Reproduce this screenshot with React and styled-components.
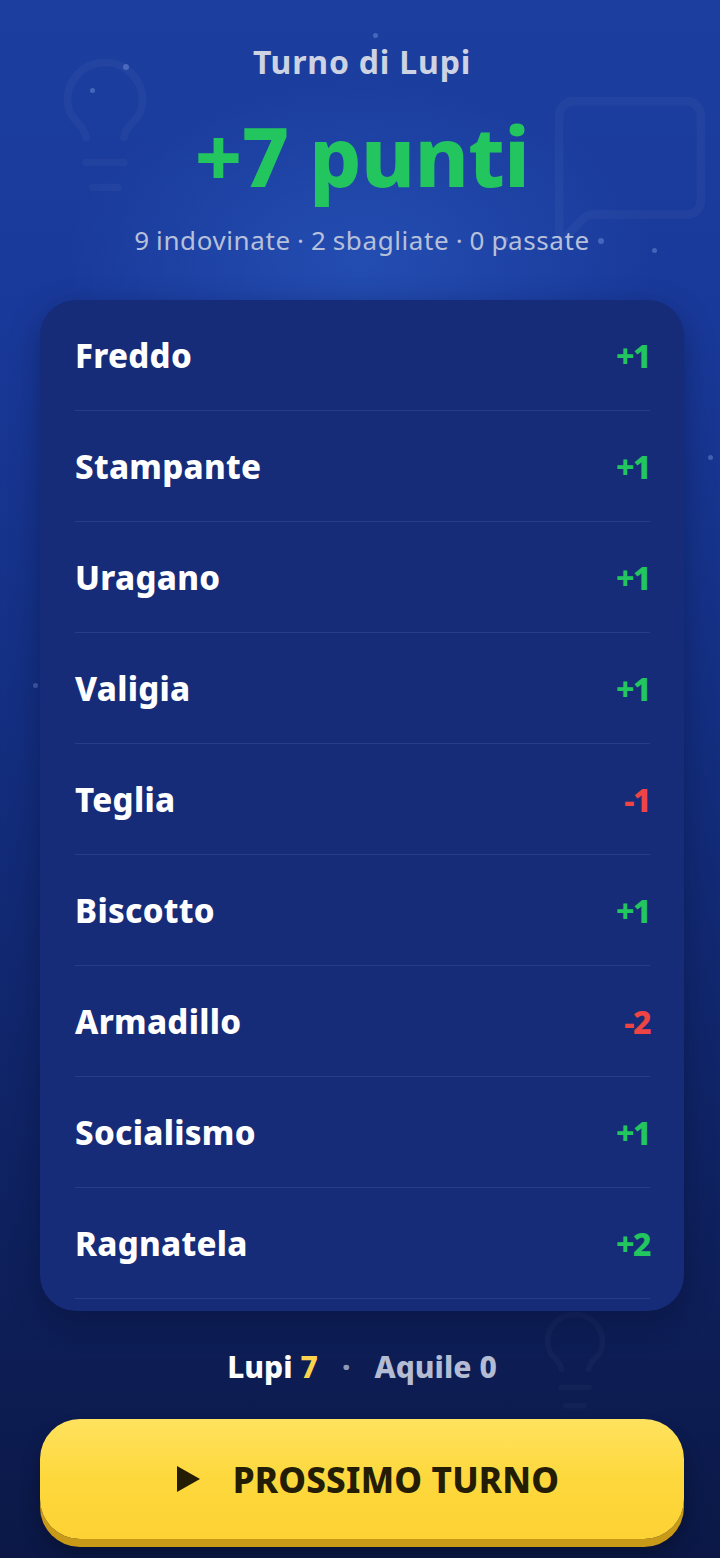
import React from "react"
import styled, { createGlobalStyle } from 'styled-components';
import { Lightbulb, MessageSquare } from "lucide-react";

const GlobalStyle = createGlobalStyle`
  html, body {
    margin: 0;
    padding: 0;
    background: #0c1a4e;
  }
  * { box-sizing: border-box; }
`;

const font = `"Noto Sans", "Open Sans", Lato, sans-serif`;

const Screen = styled.main`
  position: relative;
  width: 720px;
  min-height: 1558px;
  overflow: hidden;
  font-family: ${font};
  background:
    radial-gradient(ellipse 420px 260px at 360px 260px, rgba(46, 96, 200, 0.5), rgba(46, 96, 200, 0) 70%),
    linear-gradient(180deg, #1c3f9f 0%, #19399a 20%, #142f82 45%, #0f2262 75%, #0b1846 100%);
  display: flex;
  flex-direction: column;
  align-items: center;
  padding: 42px 36px 0 40px;
`;

const Deco = styled.div`
  position: absolute;
  left: ${p => p.x}px;
  top: ${p => p.y}px;
  color: #ffffff;
  opacity: ${p => p.o || 0.03};
  pointer-events: none;
`;

const Dot = styled.span`
  position: absolute;
  left: ${p => p.x}px;
  top: ${p => p.y}px;
  width: ${p => p.s || 6}px;
  height: ${p => p.s || 6}px;
  border-radius: 50%;
  background: rgba(170, 195, 255, 0.3);
`;

const TurnLabel = styled.h2`
  margin: 0;
  font-size: 32px;
  font-weight: 700;
  color: #cdd3e2;
  line-height: 40px;
  letter-spacing: 0.8px;
  position: relative;
`;

const Points = styled.h1`
  margin: 23px 0 0;
  font-size: 82px;
  font-weight: 800;
  color: #22c55e;
  line-height: 100px;
  letter-spacing: -0.5px;
  position: relative;
`;

const Summary = styled.p`
  margin: 19px 0 0;
  font-size: 26px;
  color: #b7c0da;
  line-height: 32px;
  letter-spacing: 0.6px;
  word-spacing: -1px;
  position: relative;
`;

const Card = styled.section`
  position: relative;
  margin-top: 44px;
  width: 644px;
  align-self: flex-start;
  background: #172c79;
  border-radius: 36px;
  padding: 0 34px 12px 35px;
  box-shadow: 0 10px 30px rgba(5, 12, 40, 0.35);
`;

const Row = styled.div`
  height: 111px;
  display: flex;
  align-items: center;
  justify-content: space-between;
  border-bottom: 1.5px solid rgba(70, 95, 170, 0.35);
`;

const Word = styled.span`
  font-size: 33px;
  font-weight: 800;
  color: #ffffff;
  letter-spacing: 0.3px;
`;

const Score = styled.span`
  font-size: 32px;
  font-weight: 800;
  color: ${p => (p.neg ? '#ef4444' : '#22c55e')};
  letter-spacing: -1.5px;
`;

const Totals = styled.div`
  position: relative;
  margin-top: 38px;
  font-size: 30px;
  font-weight: 800;
  line-height: 36px;
  display: flex;
  gap: 8px;
  align-items: baseline;
`;

const Team = styled.span`
  color: ${p => (p.active ? '#ffffff' : '#b4bcd3')};
`;

const Num = styled.span`
  color: ${p => (p.active ? '#fcd34d' : '#b4bcd3')};
`;

const Sep = styled.span`
  color: #8e98b8;
  margin: 0 16px;
`;

const NextButton = styled.button`
  position: relative;
  margin-top: 34px;
  align-self: flex-start;
  width: 644px;
  height: 120px;
  border: none;
  border-radius: 40px;
  background: linear-gradient(180deg, #ffe25e 0%, #fdd83c 50%, #fdd235 100%);
  box-shadow: 0 8px 0 #c99a18, 0 14px 20px rgba(0, 0, 0, 0.3);
  display: flex;
  align-items: center;
  justify-content: center;
  gap: 32px;
  font-family: ${font};
  font-size: 35px;
  font-weight: 800;
  color: #241d06;
  letter-spacing: 0.2px;
  padding: 0 0 0 10px;
`;

const words = [
  ['Freddo', '+1'],
  ['Stampante', '+1'],
  ['Uragano', '+1'],
  ['Valigia', '+1'],
  ['Teglia', '-1'],
  ['Biscotto', '+1'],
  ['Armadillo', '-2'],
  ['Socialismo', '+1'],
  ['Ragnatela', '+2'],
];

const App = () => (
  <>
    <GlobalStyle />
    <Screen>
      <Deco x={30} y={50}><Lightbulb size={150} strokeWidth={1.2} /></Deco>
      <Deco x={545} y={80}><MessageSquare size={170} strokeWidth={1.2} /></Deco>
      <Deco x={520} y={1305} o={0.025}><Lightbulb size={110} strokeWidth={1.2} /></Deco>
      <Dot x={123} y={64} />
      <Dot x={90} y={88} s={5} />
      <Dot x={373} y={33} s={5} />
      <Dot x={503} y={237} s={5} />
      <Dot x={598} y={238} />
      <Dot x={652} y={248} s={5} />
      <Dot x={33} y={683} s={5} />
      <Dot x={708} y={455} s={5} />

      <TurnLabel>Turno di Lupi</TurnLabel>
      <Points>+7 punti</Points>
      <Summary>9 indovinate · 2 sbagliate · 0 passate</Summary>

      <Card>
        {words.map(([w, s]) => (
          <Row key={w}>
            <Word>{w}</Word>
            <Score neg={s.startsWith('-')}>{s}</Score>
          </Row>
        ))}
      </Card>

      <Totals>
        <Team active>Lupi</Team>
        <Num active>7</Num>
        <Sep>·</Sep>
        <Team>Aquile</Team>
        <Num>0</Num>
      </Totals>

      <NextButton>
        <svg width="26" height="28" viewBox="0 0 26 28">
          <path d="M2 1 L25 14 L2 27 Z" fill="#241d06" />
        </svg>
        PROSSIMO TURNO
      </NextButton>
    </Screen>
  </>
);

export default App;
